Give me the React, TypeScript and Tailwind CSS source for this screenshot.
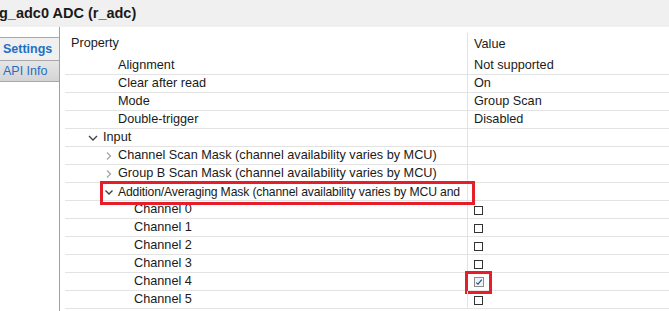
import { ReactNode } from "react"

type Row = {
  label: string
  value?: string
  indent: number
  toggle?: "open" | "closed" | "check"
  check?: "empty" | "checked"
  boxed?: boolean
  boxedCheck?: boolean
}

const rows: Row[] = [
  { label: "Alignment", value: "Not supported", indent: 53 },
  { label: "Clear after read", value: "On", indent: 53 },
  { label: "Mode", value: "Group Scan", indent: 53 },
  { label: "Double-trigger", value: "Disabled", indent: 53 },
  { label: "Input", indent: 21, toggle: "open" },
  { label: "Channel Scan Mask (channel availability varies by MCU)", indent: 38, toggle: "closed" },
  { label: "Group B Scan Mask (channel availability varies by MCU)", indent: 38, toggle: "closed" },
  { label: "Addition/Averaging Mask (channel availability varies by MCU and", indent: 38, toggle: "check", boxed: true },
  { label: "Channel 0", indent: 69, check: "empty" },
  { label: "Channel 1", indent: 69, check: "empty" },
  { label: "Channel 2", indent: 69, check: "empty" },
  { label: "Channel 3", indent: 69, check: "empty" },
  { label: "Channel 4", indent: 69, check: "checked", boxedCheck: true },
  { label: "Channel 5", indent: 69, check: "empty" },
]

function Toggle({ kind }: { kind: Row["toggle"] }) {
  if (kind === "closed")
    return (
      <svg width="12" height="12" viewBox="0 0 12 12" className="shrink-0">
        <path d="M4 2.5 L7.5 6 L4 9.5" fill="none" stroke="#a6a6a6" strokeWidth="1.3" />
      </svg>
    )
  if (kind === "open")
    return (
      <svg width="14" height="12" viewBox="0 0 14 12" className="shrink-0">
        <path d="M3 4 L7 8 L11 4" fill="none" stroke="#404040" strokeWidth="1.3" />
      </svg>
    )
  return (
    <svg width="12" height="12" viewBox="0 0 12 12" className="shrink-0">
      <path d="M2.5 4.5 L6 8 L9.5 4.5" fill="none" stroke="#404040" strokeWidth="1.4" />
    </svg>
  )
}

function CheckBox({ checked }: { checked: boolean }) {
  if (checked)
    return (
      <div className="w-[10px] h-[10px] border border-[#8c8c8c] bg-[#eef3f8] flex items-center justify-center">
        <svg width="8" height="8" viewBox="0 0 8 8">
          <path d="M1.2 4.6 L3 6.2 L6.8 1.6" fill="none" stroke="#2f4f7f" strokeWidth="1.2" />
        </svg>
      </div>
    )
  return <div className="w-[9px] h-[9px] border border-[#333333] bg-white" />
}

function Cell({ children, className }: { children: ReactNode; className?: string }) {
  return <div className={"flex items-center h-full " + (className ?? "")}>{children}</div>
}

export default function App() {
  return (
    <div className="w-[669px] h-[311px] overflow-hidden bg-white text-[12.7px] text-[#1a1a1a] font-['Liberation_Sans',Arial,sans-serif]">
      <div className="h-[27px] bg-[#f0f0f0] text-[14.5px] font-bold leading-[27px] text-[#1a1a1a] -ml-[1px]">
        g_adc0 ADC (r_adc)
      </div>
      <div className="flex h-[284px]">
        <div className="w-[60px] shrink-0 border-r border-[#a0a0a0] pt-[10px]">
          <div className="h-[23px] border-t border-[#a8a8a8] bg-[#f0f0f0] pl-[3px] text-[12.5px] font-bold leading-[22px] text-[#1f6fc5]">
            Settings
          </div>
          <div className="h-[22px] border-t border-b border-[#a8a8a8] bg-gradient-to-b from-[#e6e6e6] to-[#d4d4d4] pl-[3px] text-[12.5px] leading-[20px] text-[#1f6fc5]">
            API Info
          </div>
        </div>
        <div className="flex-1 pl-[5px]">
          <div className="flex h-[30px]">
            <Cell className="w-[402px] pl-[6px] pt-[4px]">Property</Cell>
            <div className="flex-1 mt-[6px] border-l border-[#e3e3e3] pl-[6px] flex items-center">Value</div>
          </div>
          {rows.map((r) => (
            <div key={r.label} className="flex h-[18px] border-b border-[#e3e3e3]">
              <div className="relative w-[402px] h-full">
                <div className="flex items-center h-full pt-[1px] overflow-hidden whitespace-nowrap" style={{ paddingLeft: r.indent }}>
                  {r.toggle && <Toggle kind={r.toggle} />}
                  <span className={r.boxed ? "ml-[3px] text-[12.2px] tracking-[-0.15px]" : r.toggle ? "ml-[3px]" : ""}>{r.label}</span>
                </div>
                {r.boxed && (
                  <div className="absolute left-[35px] top-[-2px] w-[375px] h-[24px] border-[3px] border-[#e61e2a] z-10" />
                )}
              </div>
              <div className="relative flex-1 border-l border-[#e3e3e3] pl-[6px] pt-[1px] flex items-center">
                {r.value}
                {r.check && <CheckBox checked={r.check === "checked"} />}
                {r.boxedCheck && (
                  <div className="absolute left-[-3px] top-[-2px] w-[27px] h-[23px] border-[3px] border-[#e61e2a]" />
                )}
              </div>
            </div>
          ))}
        </div>
      </div>
    </div>
  )
}
